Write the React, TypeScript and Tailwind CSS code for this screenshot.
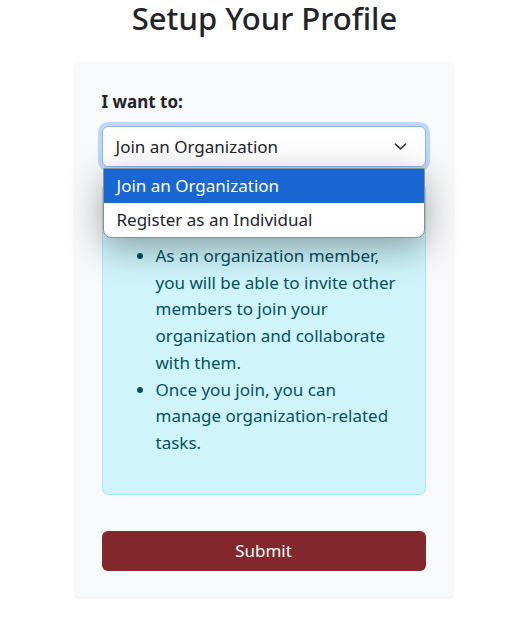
import { useState } from "react";

const OPTIONS = ["Join an Organization", "Register as an Individual"];

export default function App() {
  const [choice, setChoice] = useState(OPTIONS[0]);
  const [open, setOpen] = useState(true);

  return (
    <div className="min-h-screen bg-white pt-px font-['Noto_Sans',sans-serif] text-[17px] text-[#212529]">
      <h1 className="-mt-[4px] text-center text-[31px] font-medium leading-[42px]">Setup Your Profile</h1>

      <div className="mx-auto mt-[23px] w-[380px] -translate-x-[1px] rounded-md bg-[#f8f9fa] px-7 pt-7 pb-[26px] shadow-[0_1px_3px_rgba(0,0,0,0.08)]">
        <label className="mb-[12px] block font-bold leading-6">I want to:</label>

        <div className="relative">
          <button
            onClick={() => setOpen(!open)}
            className="flex h-[41px] w-full items-center justify-between rounded-md border border-[#86b7fe] bg-white pl-[13px] pr-[17px] text-left ring-4 ring-[#0d6efd]/25"
          >
            <span>{choice}</span>
            <svg width="15" height="15" viewBox="0 0 16 16" fill="none" stroke="#343a40" strokeWidth="1.7" strokeLinecap="round" strokeLinejoin="round">
              <path d="M2.5 5.5l5.5 5 5.5-5" />
            </svg>
          </button>

          {open && (
            <div className="absolute top-[42px] right-[1px] left-[1px] z-10 overflow-hidden rounded-b-lg border border-[#8c9196] bg-white shadow-[0_10px_36px_rgba(0,0,0,0.35)]">
              {OPTIONS.map((o) => (
                <div
                  key={o}
                  onClick={() => {
                    setChoice(o);
                    setOpen(false);
                  }}
                  className={
                    o === choice
                      ? "flex h-[34px] items-center bg-[#1a66d2] pl-[13px] text-white"
                      : "flex h-[34px] items-center pl-[13px] text-[#212529]"
                  }
                >
                  {o}
                </div>
              ))}
            </div>
          )}
        </div>

        <div className="mt-4 rounded-md border border-[#a5ecfa] bg-[#cff4fc] pt-[59px] pr-[25px] pb-[37px] pl-4 leading-[26.7px] text-[#055160]">
          <ul className="list-disc pl-[37px]">
            <li>
              As an organization member, you will be able to invite other members to join your organization and
              collaborate with them.
            </li>
            <li>Once you join, you can manage organization-related tasks.</li>
          </ul>
        </div>

        <button className="mt-[36px] flex h-10 w-full items-center justify-center rounded-md bg-[#82272b] text-white">
          Submit
        </button>
      </div>
    </div>
  );
}
